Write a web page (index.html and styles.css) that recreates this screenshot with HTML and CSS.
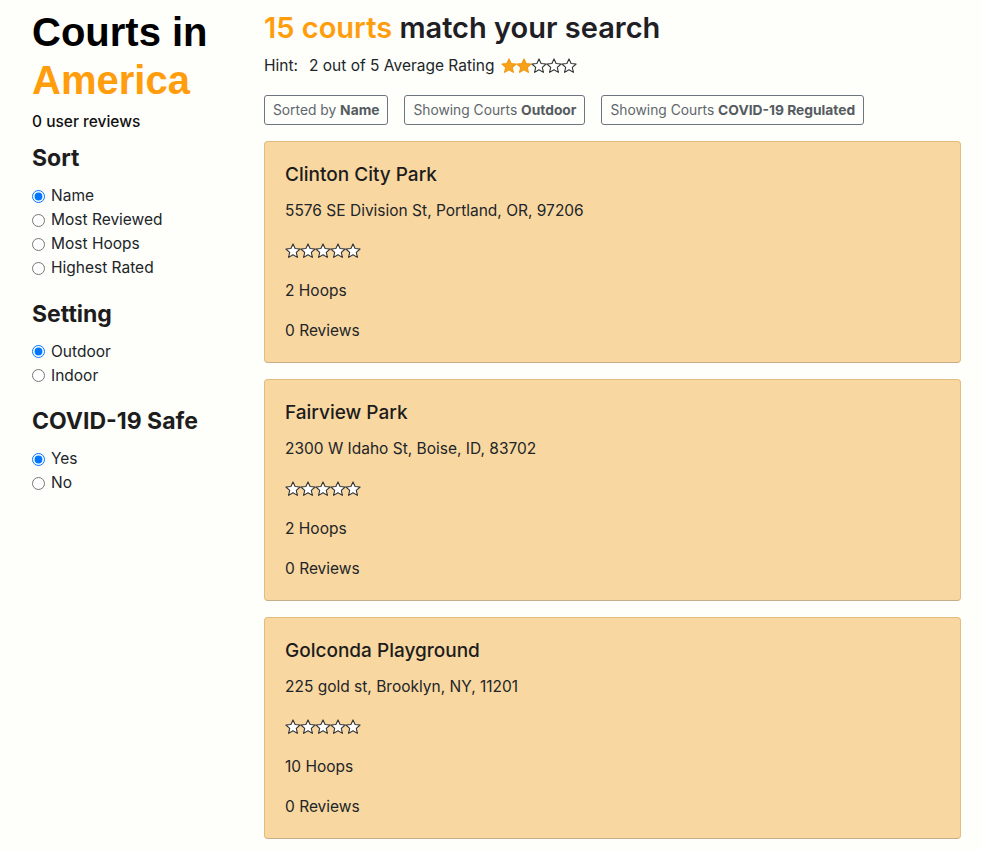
FILE: index.html
```html
<!DOCTYPE html>
<html>
<head>
<meta charset="utf-8">
<link rel="stylesheet" href="styles.css">
</head>
<body>
<svg width="0" height="0" class="defs">
  <defs>
    <path id="star" d="M8 0.9 L10.1 5.5 L15.1 6 L11.3 9.4 L12.4 14.4 L8 11.8 L3.6 14.4 L4.7 9.4 L0.9 6 L5.9 5.5 Z"/>
  </defs>
</svg>
<div class="page">
  <aside class="sidebar">
    <h1 class="title">Courts in<br><span class="accent">America</span></h1>
    <div class="user-reviews">0 user reviews</div>

    <h4 class="group-title">Sort</h4>
    <label class="opt"><input type="radio" name="sort" checked> Name</label>
    <label class="opt"><input type="radio" name="sort"> Most Reviewed</label>
    <label class="opt"><input type="radio" name="sort"> Most Hoops</label>
    <label class="opt"><input type="radio" name="sort"> Highest Rated</label>

    <h4 class="group-title spaced">Setting</h4>
    <label class="opt"><input type="radio" name="setting" checked> Outdoor</label>
    <label class="opt"><input type="radio" name="setting"> Indoor</label>

    <h4 class="group-title spaced">COVID-19 Safe</h4>
    <label class="opt"><input type="radio" name="covid" checked> Yes</label>
    <label class="opt"><input type="radio" name="covid"> No</label>
  </aside>

  <main class="main">
    <h2 class="results"><span class="accent">15 courts</span> match your search</h2>
    <div class="hint">
      <span class="hint-label">Hint:</span>
      <span>2 out of 5 Average Rating</span>
      <span class="stars">
        <svg class="st on" viewBox="0 0 16 16"><use href="#star"/></svg><svg class="st on" viewBox="0 0 16 16"><use href="#star"/></svg><svg class="st" viewBox="0 0 16 16"><use href="#star"/></svg><svg class="st" viewBox="0 0 16 16"><use href="#star"/></svg><svg class="st" viewBox="0 0 16 16"><use href="#star"/></svg>
      </span>
    </div>
    <div class="filters">
      <span class="chip">Sorted by <b>Name</b></span>
      <span class="chip">Showing Courts <b>Outdoor</b></span>
      <span class="chip">Showing Courts <b>COVID-19 Regulated</b></span>
    </div>

    <div class="card">
      <h5 class="card-title">Clinton City Park</h5>
      <p class="line">5576 SE Division St, Portland, OR, 97206</p>
      <div class="stars card-stars">
        <svg class="st" viewBox="0 0 16 16"><use href="#star"/></svg><svg class="st" viewBox="0 0 16 16"><use href="#star"/></svg><svg class="st" viewBox="0 0 16 16"><use href="#star"/></svg><svg class="st" viewBox="0 0 16 16"><use href="#star"/></svg><svg class="st" viewBox="0 0 16 16"><use href="#star"/></svg>
      </div>
      <p class="line">2 Hoops</p>
      <p class="line last">0 Reviews</p>
    </div>

    <div class="card">
      <h5 class="card-title">Fairview Park</h5>
      <p class="line">2300 W Idaho St, Boise, ID, 83702</p>
      <div class="stars card-stars">
        <svg class="st" viewBox="0 0 16 16"><use href="#star"/></svg><svg class="st" viewBox="0 0 16 16"><use href="#star"/></svg><svg class="st" viewBox="0 0 16 16"><use href="#star"/></svg><svg class="st" viewBox="0 0 16 16"><use href="#star"/></svg><svg class="st" viewBox="0 0 16 16"><use href="#star"/></svg>
      </div>
      <p class="line">2 Hoops</p>
      <p class="line last">0 Reviews</p>
    </div>

    <div class="card">
      <h5 class="card-title">Golconda Playground</h5>
      <p class="line">225 gold st, Brooklyn, NY, 11201</p>
      <div class="stars card-stars">
        <svg class="st" viewBox="0 0 16 16"><use href="#star"/></svg><svg class="st" viewBox="0 0 16 16"><use href="#star"/></svg><svg class="st" viewBox="0 0 16 16"><use href="#star"/></svg><svg class="st" viewBox="0 0 16 16"><use href="#star"/></svg><svg class="st" viewBox="0 0 16 16"><use href="#star"/></svg>
      </div>
      <p class="line">10 Hoops</p>
      <p class="line last">0 Reviews</p>
    </div>
  </main>
</div>
</body>
</html>
```
FILE: styles.css
```css
html, body {
  margin: 0;
  padding: 0;
  background: #fefefa;
  color: #212529;
  font-family: Inter, "Noto Sans", sans-serif;
  font-size: 16px;
  line-height: 24px;
}
.defs { position: absolute; width: 0; height: 0; }
.page {
  display: flex;
  padding: 8px 21px 0 32px;
  height: 842px;
  overflow: hidden;
}
.sidebar {
  width: 232px;
  flex: none;
  display: flex;
  flex-direction: column;
}
.title {
  margin: 0;
  font-family: "Liberation Sans", Arial, sans-serif;
  font-size: 40px;
  line-height: 48px;
  font-weight: 700;
  color: #000;
}
.accent { color: #ff9d0c; }
.user-reviews {
  margin-top: 6px;
  font-weight: 500;
  font-size: 15.5px;
  color: #111;
}
.group-title {
  margin: 10px 0 11px 0;
  font-size: 23px;
  line-height: 29px;
  font-weight: 700;
  color: #1d1d1d;
}
.group-title.spaced { margin-top: 19.5px; }
.opt {
  display: flex;
  align-items: center;
  height: 24px;
  font-size: 15.5px;
  color: #212529;
}
.opt input {
  margin: 0 6px 0 0;
  width: 13px;
  height: 13px;
}
.main {
  flex: 1;
  min-width: 0;
}
.results {
  margin: 1px 0 0 0;
  font-size: 29px;
  line-height: 38px;
  font-weight: 600;
  color: #1e2025;
}
.hint {
  margin-top: 7px;
  display: flex;
  align-items: center;
  height: 24px;
  font-size: 15.5px;
}
.hint-label { margin-right: 11px; }
.stars {
  display: inline-flex;
  align-items: center;
}
.hint .stars { margin-left: 7px; }
.st {
  width: 16px;
  height: 16px;
  margin-right: -1px;
  fill: #fff;
  stroke: #333;
  stroke-width: 1.1;
  stroke-linejoin: round;
}
.st.on { fill: #f7a21a; stroke: #f29a10; }
.filters {
  margin-top: 17px;
  display: flex;
  gap: 16px;
}
.chip {
  display: inline-block;
  border: 1px solid #6c757d;
  border-radius: 3px;
  padding: 3px 8px;
  font-size: 13.8px;
  line-height: 22px;
  color: #5f666d;
}
.chip b { font-weight: 700; color: #555b61; }
.card {
  margin-top: 16px;
  background: #f9d7a0;
  border: 1px solid #e2bd7e;
  border-bottom-color: #c9ad86;
  border-radius: 4px;
  padding: 21px 20px 19px 20px;
}
.card + .card { margin-top: 16px; }
.card-title {
  margin: 0 0 12px 0;
  font-size: 19px;
  line-height: 24px;
  font-weight: 500;
  color: #1c1c1c;
}
.line {
  margin: 0 0 16px 0;
  font-size: 15.5px;
  line-height: 24px;
  color: #212529;
}
.line.last { margin-bottom: 0; }
.card-stars {
  height: 24px;
  margin-bottom: 16px;
}
.card-stars .st { width: 16px; height: 16px; }
```
